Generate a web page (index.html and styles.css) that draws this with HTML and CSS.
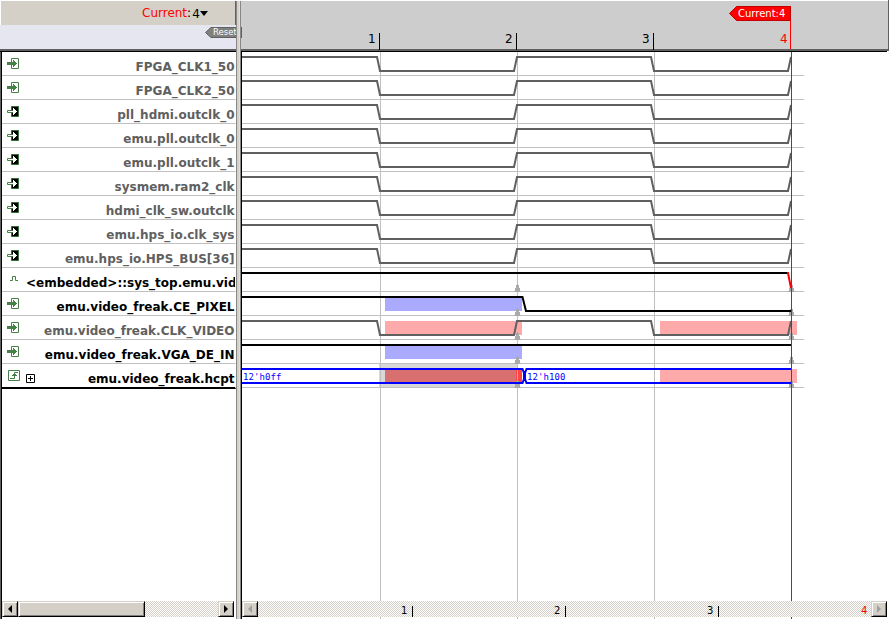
FILE: index.html
```
<!DOCTYPE html>
<html lang="en">
<head>
<meta charset="utf-8">
<title>Waveform viewer</title>
<link rel="stylesheet" href="styles.css">
</head>
<body>
<svg class="defs" aria-hidden="true">
  <defs>
    <g id="port-in"><path d="M4.5 1.5h7v10h-7z" fill="#fff" stroke="#488148"/><path d="M0 5h6V3h1v1h1v1h1v1h1v1H9v1H8v1H7v1H6V8H0z" fill="#488148"/></g>
    <g id="port-net"><path d="M4.500 1.500h7v10h-7z" fill="#000" stroke="#357035"/><path d="M0.500 5.500h5v2h-5z" fill="#fff" stroke="#488148"/><path d="M1 6h5V3h1v1h1v1h1v1h1v1H9v1H8v1H7v1H6V7H1z" fill="#fff"/></g>
    <g id="pulse"><path d="M3 7.500h2.500v-4h3v4H11" fill="none" stroke="#488148"/></g>
    <g id="reg"><path d="M1.500 1.500h11v10h-11z" fill="#fff" stroke="#488148"/><path d="M3 9.500h4.500v-6H11M5 6.500h5M6 5.500h3" fill="none" stroke="#488148"/></g>
    <path id="clk" d="M242 57H377L380 71H514L517 57H651L654 71H788L791 57" fill="none" stroke="#606060" stroke-width="2"/>
    <path id="mark" d="M0 8V7H1V4H2V1H3V0H4V1H5V4H6V7H7V8z" fill="#aaa"/>
  </defs>
</svg>
<main class="viewer">
  <section class="names">
    <header class="names-head">
      <div class="current"><span class="red">Current</span>:<span class="val">4</span><svg width="8" height="5"><path d="M0 0h8L4 5z"/></svg></div>
      <div class="reset-row"><svg class="reset" width="31" height="11"><path d="M.5 5.500L6 .5H31V10.500H6z" fill="#808080" stroke="#606060"/><text x="8" y="8">Reset</text></svg></div>
    </header>
    <div class="names-body">
      <ul class="signals">
        <li class="dim"><svg><use href="#port-in"/></svg><span>FPGA_CLK1_50</span></li>
        <li class="dim"><svg><use href="#port-in"/></svg><span>FPGA_CLK2_50</span></li>
        <li class="dim"><svg><use href="#port-net"/></svg><span>pll_hdmi.outclk_0</span></li>
        <li class="dim"><svg><use href="#port-net"/></svg><span>emu.pll.outclk_0</span></li>
        <li class="dim"><svg><use href="#port-net"/></svg><span>emu.pll.outclk_1</span></li>
        <li class="dim"><svg><use href="#port-net"/></svg><span>sysmem.ram2_clk</span></li>
        <li class="dim"><svg><use href="#port-net"/></svg><span>hdmi_clk_sw.outclk</span></li>
        <li class="dim"><svg><use href="#port-net"/></svg><span>emu.hps_io.clk_sys</span></li>
        <li class="dim"><svg><use href="#port-net"/></svg><span>emu.hps_io.HPS_BUS[36]</span></li>
        <li class="long"><svg><use href="#pulse"/></svg><span>&lt;embedded&gt;::sys_top.emu.vid</span></li>
        <li><svg><use href="#port-in"/></svg><span>emu.video_freak.CE_PIXEL</span></li>
        <li class="dim"><svg><use href="#port-in"/></svg><span>emu.video_freak.CLK_VIDEO</span></li>
        <li><svg><use href="#port-in"/></svg><span>emu.video_freak.VGA_DE_IN</span></li>
        <li class="last"><svg><use href="#reg"/></svg><svg class="plus" viewBox="0 0 9 9"><path d="M.5.5h8v8h-8zM2 4.500h5M4.500 2v5" fill="none" stroke="#000"/></svg><span>emu.video_freak.hcpt</span></li>
      </ul>
      <div class="scroll">
        <div class="btn"><svg width="4" height="8"><path d="M4 0v8L0 4z"/></svg></div>
        <div class="thumb"></div>
        <div class="track"></div>
        <div class="btn"><svg width="4" height="8"><path d="M0 0v8l4-4z"/></svg></div>
      </div>
    </div>
  </section>
  <div class="splitter"></div>
  <section class="waves">
    <svg class="ruler" viewBox="241 0 648 52" width="648" height="52">
      <path d="M241 0h648v52H241z" fill="#fff"/>
      <path d="M241 1h647v48H241z" fill="#cdcdcd"/>
      <path d="M241 49h648v2H241zM888 0h1v51h-1z" fill="#606060"/>
      <path d="M241 51h646v1H241z"/>
      <path d="M241 27h1v11h-1z" fill="#606060"/>
      <path d="M379 33h1v17h-1zM516 33h1v17h-1zM653 33h1v17h-1z"/>
      <path d="M790 6h1v43h-1z" fill="red"/>
      <path d="M729.500 13.500L736.500 6.500H790.500V20.500H736.500z" fill="red" stroke="#c00000"/>
      <text class="tag" x="738" y="17">Current:4</text>
      <g class="nums"><text x="368" y="43">1</text><text x="505" y="43">2</text><text x="642" y="43">3</text><text class="redfill" x="780" y="43">4</text></g>
    </svg>
    <div class="plot">
      <svg class="canvas" viewBox="242 52 647 567" width="647" height="567">
        <path d="M379 363h138v24H379z" fill="#d8d8d8"/>
        <g fill="#c0c0c0">
          <path d="M380 52h1v567h-1zM517 52h1v567h-1zM654 52h1v567h-1z"/>
          <path d="M242 75h562v1H242zM242 99h562v1H242zM242 123h562v1H242zM242 147h562v1H242zM242 171h562v1H242zM242 195h562v1H242zM242 219h562v1H242zM242 243h562v1H242zM242 267h562v1H242zM242 291h562v1H242zM242 315h562v1H242zM242 339h562v1H242zM242 363h562v1H242zM242 387h562v1H242z"/>
        </g>
        <path d="M385 298h137v13H385zM385 346h137v13H385z" fill="#aaf"/>
        <path d="M385 321h137v14H385zM660 321h137v14H660zM660 369h137v14H660z" fill="#faa"/>
        <path d="M385 369h131v14H385z" fill="#d87070"/>
        <path d="M516 369h6v14h-6z" fill="#f44"/><path d="M517 369h1v14h-1z" fill="#f99"/>
        <use href="#mark" x="514" y="284"/><use href="#mark" x="514" y="308"/><use href="#mark" x="514" y="332"/><use href="#mark" x="514" y="356"/><use href="#mark" x="514" y="380"/>
        <use href="#mark" x="788" y="284"/><use href="#mark" x="788" y="308"/><use href="#mark" x="788" y="332"/><use href="#mark" x="788" y="356"/><use href="#mark" x="788" y="380"/>
        <use href="#clk"/><use href="#clk" y="24"/><use href="#clk" y="48"/><use href="#clk" y="72"/><use href="#clk" y="96"/><use href="#clk" y="120"/><use href="#clk" y="144"/><use href="#clk" y="168"/><use href="#clk" y="192"/><use href="#clk" y="264"/>
        <g fill="none" stroke="#000" stroke-width="2">
          <path d="M242 273H788M242 297H522.500L526 311H791M242 345H791"/>
          <path d="M787 273H788L791 288" stroke="red"/>
          <path d="M242 369H522.500L524 373V379L522.500 383H242M791 369H526.500L525 373V379L526.500 383H791" stroke="#00f"/>
        </g>
        <path d="M791 52h1v567h-1z" fill="red"/>
        <g class="bus"><text x="243" y="380">12'h0ff</text><text x="527" y="380">12'h100</text></g>
      </svg>
      <div class="scroll wide">
        <div class="btn"><svg width="4" height="8"><path d="M4 0v8L0 4z" fill="#a0a0a0"/></svg></div>
        <svg class="track ticks" viewBox="258 601 613 16"><path d="M412 606h1v11h-1zM565 606h1v11h-1zM718 606h1v11h-1z"/><text x="401" y="614">1</text><text x="554" y="614">2</text><text x="707" y="614">3</text><text class="redfill" x="861" y="614">4</text></svg>
        <div class="btn"><svg width="4" height="8"><path d="M0 0v8l4-4z" fill="#a0a0a0"/></svg></div>
      </div>
    </div>
  </section>
</main>
</body>
</html>
```
FILE: styles.css
```
* { box-sizing: border-box; }
body { margin: 0; background: #fff; font-family: "DejaVu Sans", sans-serif; }
svg { display: block; flex: none; }
.defs { display: none; }
.viewer { display: grid; grid-template-columns: 236px 5px 648px; width: 889px; height: 619px; overflow: hidden; }
.names, .waves { display: grid; grid-template-columns: minmax(0, 1fr); grid-template-rows: 52px 567px; min-width: 0; }
.names-head { border-top: 1px solid #fff; border-bottom: 1px solid #000; }
.current { display: flex; align-items: center; height: 24px; margin-left: 1px; padding-left: 141px; background: #d4d0c8; border-right: 1px solid #606060; font-size: 12px; }
.current .val { margin: 1px 0 0 1px; }
.red { color: red; }
.redfill { fill: red; }
.reset-row { display: flex; justify-content: flex-end; height: 26px; padding-top: 2px; background: #e6e6f0; border-bottom: 2px solid #606060; }
.reset text { font-size: 8.5px; fill: #fff; }
.names-body { display: flex; flex-direction: column; justify-content: space-between; padding-bottom: 2px; border-left: 1px solid #606060; box-shadow: inset 1px 0 #000; }
.signals { list-style: none; margin: 0; padding: 0 0 0 1px; }
.signals li { display: flex; align-items: center; height: 24px; padding: 0 0 0 5px; border-bottom: 1px solid #c0c0c0; border-right: 1px solid transparent; font-weight: bold; font-size: 12px; line-height: 15px; overflow: hidden; white-space: nowrap; }
.signals li > svg { width: 14px; height: 13px; margin-bottom: 1px; }
.signals li > .plus { width: 9px; height: 9px; margin: 5px 0 0 5px; }
.signals li > span { margin: 8px .5px 0 auto; }
.signals li.dim { color: #606060; }
.signals li.long > span { margin-left: 5px; }
.signals li.last { height: 25px; border-bottom: 2px solid #000; }
.scroll { display: flex; height: 16px; margin: 0 2px 0 1px; }
.btn, .thumb { flex: none; width: 16px; height: 16px; background: #d4d0c8; border: 1px solid; border-color: #d4d0c8 #000 #000 #d4d0c8; box-shadow: inset 1px 1px #fff, inset -1px -1px #808080; }
.btn { display: grid; place-items: center; }
.thumb { width: 127px; }
.track { flex: 1; background: repeating-conic-gradient(#d4d0c8 0 25%, #fff 0 50%) 0 0 / 2px 2px; }
.splitter { background: linear-gradient(90deg, #888 0 1px, #d4d0c8 1px 3px, #e2dfd8 3px 4px, #888 4px); border-top: 1px solid #fff; }
.tag { font-size: 10px; fill: #fff; }
.nums { font-size: 12px; }
.plot { display: grid; border-left: 1px solid #000; }
.canvas, .wide { grid-area: 1 / 1; }
.wide { align-self: end; width: 645px; margin: 0 0 2px; }
.ticks { font-size: 10px; height: 16px; min-width: 0; }
.bus { font: 9px "DejaVu Sans Mono", monospace; letter-spacing: .1px; fill: #00f; }
```
